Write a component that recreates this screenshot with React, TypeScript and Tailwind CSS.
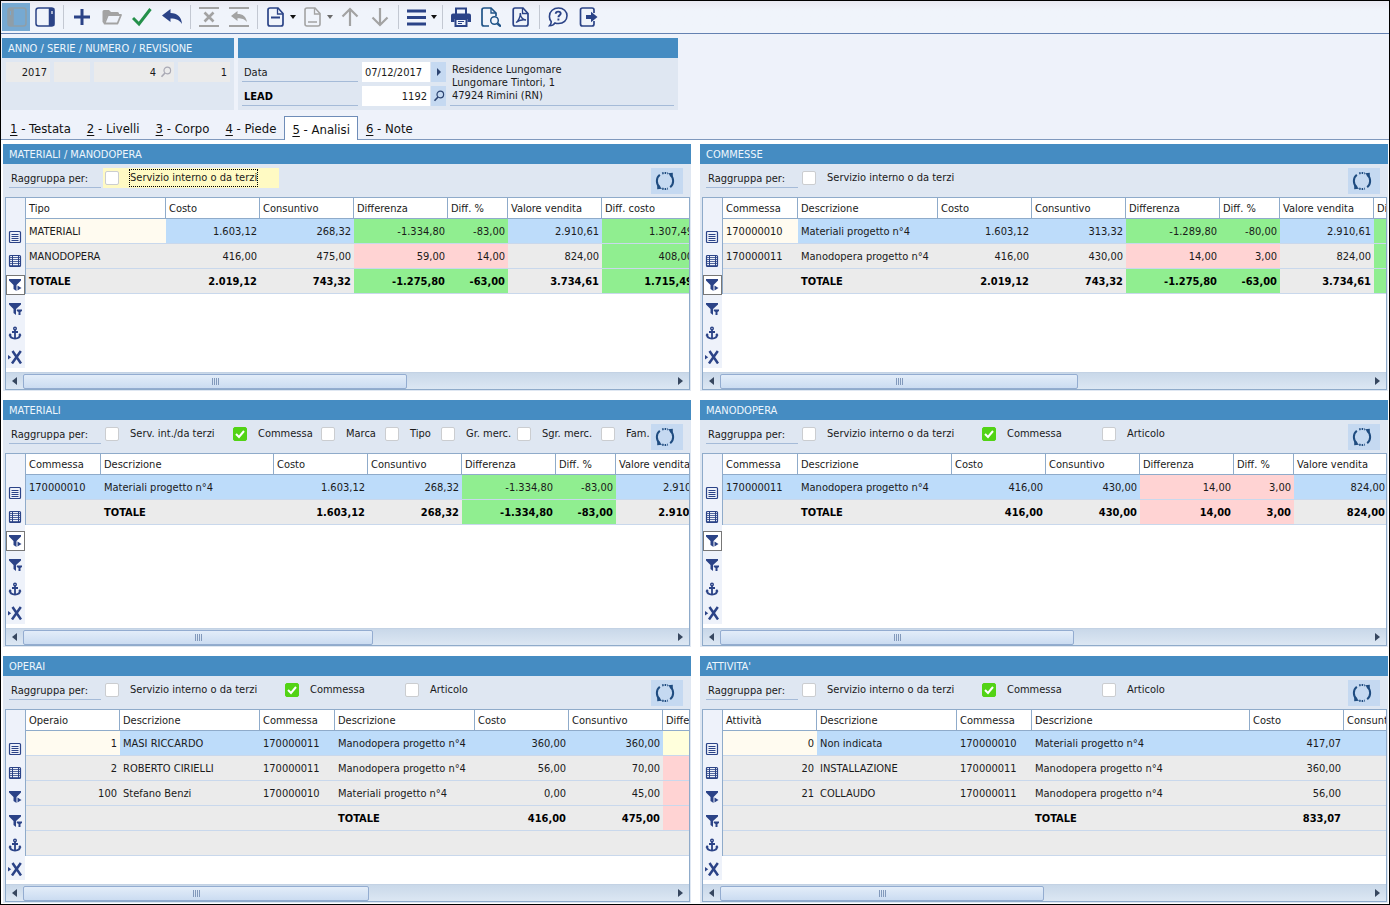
import type { ReactNode } from "react"
import { clsx } from "clsx"

const NAVY = "#2b4387"
const GREY = "#a3a3a3"

/* ---------- toolbar icons, all on a 20x20 grid ---------- */

function Glyph({ children, color = NAVY }: { children: ReactNode; color?: string }) {
  return (
    <svg
      width="20"
      height="20"
      viewBox="0 0 20 20"
      fill="none"
      stroke={color}
      strokeWidth="2"
      className="shrink-0"
      aria-hidden="true"
    >
      {children}
    </svg>
  )
}

const PanelLeftIcon = () => (
  <Glyph color="#8f9ea8">
    <rect x="1" y="1" width="18" height="18" rx="2.500" strokeWidth="1.500" />
    <path d="M4 1v18" strokeWidth="5.500" />
    <path d="M3.500 4v4" stroke="#76a9d2" strokeWidth="1" />
  </Glyph>
)

const PanelRightIcon = () => (
  <Glyph>
    <rect x="1" y="1" width="18" height="18" rx="2.500" strokeWidth="1.500" />
    <path d="M16.500 1v18" strokeWidth="5.500" />
    <path d="M17 4v3" stroke="#fff" strokeWidth="1.200" />
  </Glyph>
)

const PlusIcon = () => (
  <Glyph>
    <path d="M10 2v16M2 10h16" strokeWidth="3" />
  </Glyph>
)

const FolderIcon = () => (
  <Glyph color={GREY}>
    <path d="M.5 15V4.500Q.5 3 2 3h5l2 2h6.500q1.500 0 1.500 1.500V8H5.500L2 16.500z" fill={GREY} stroke="none" />
    <path d="M2.500 16.500 6 8h13l-3.500 8.500z" fill="#eef2fa" strokeWidth="1.800" strokeLinejoin="round" />
  </Glyph>
)

const CheckIcon = () => (
  <Glyph color="#24904a">
    <path d="M1 11 7 17 18.500 2" strokeWidth="3" />
  </Glyph>
)

const UndoIcon = () => (
  <Glyph>
    <path d="M0 8.500 8.500 2v4c7 0 11 4 11.500 11-2.500-4-6-5.500-11.500-5.500V15z" fill={NAVY} stroke="none" />
  </Glyph>
)

const DiscardIcon = () => (
  <Glyph color={GREY}>
    <path d="M0 1h20M0 19h20" strokeWidth="1.800" />
    <path d="m5.500 5.500 9 9M14.500 5.500l-9 9" strokeWidth="2.600" />
  </Glyph>
)

const RestoreIcon = () => (
  <Glyph color={GREY}>
    <path d="M0 1h20M0 19h20" strokeWidth="1.800" />
    <path d="M2 9 8.500 4v3c5.500 0 8.500 2.500 9.500 8-2.500-3-5-3.800-9.500-3.800V14z" fill={GREY} stroke="none" />
  </Glyph>
)

const PageIcon = () => (
  <Glyph>
    <path d="M4 1h8l5 5.500V17q0 2-2 2H4q-2 0-2-2V3q0-2 2-2z" strokeWidth="1.700" />
    <path d="M11.500 1v6H17" strokeWidth="1.300" />
    <path d="M5 10.500h9" />
  </Glyph>
)

const PageGreyIcon = () => (
  <Glyph color={GREY}>
    <path d="M4 1h8l5 5.500V17q0 2-2 2H4q-2 0-2-2V3q0-2 2-2z" strokeWidth="1.600" />
    <path d="M11.500 1v6H17" strokeWidth="1.300" />
    <path d="M5 15h9" strokeWidth="1.500" />
  </Glyph>
)

const UpIcon = () => (
  <Glyph color={GREY}>
    <path d="M10 19V2M2.500 9.500 10 2l7.500 7.500" strokeWidth="2.200" />
  </Glyph>
)

const DownIcon = () => (
  <Glyph color={GREY}>
    <path d="M10 1v17M2.500 10.500 10 18l7.500-7.500" strokeWidth="2.200" />
  </Glyph>
)

const MenuIcon = () => (
  <Glyph>
    <path d="M0 4h19M0 10.500h19M0 17h19" strokeWidth="2.800" />
  </Glyph>
)

const PrintIcon = () => (
  <Glyph>
    <path d="M5 7V1.500h10V7" />
    <path d="M2 6.500h16q2 0 2 2V15h-3.500v-3h-13v3H0V8.500q0-2 2-2z" fill={NAVY} stroke="none" />
    <path d="M4.500 12h11v7h-11z" />
    <path d="M7 14.500h6M7 16.500h4" strokeWidth="1" />
  </Glyph>
)

const PreviewIcon = () => (
  <Glyph color="#1f5387">
    <path d="M8 19H3q-2 0-2-2V3q0-2 2-2h7l5 5v3" strokeWidth="1.700" />
    <path d="M10 1v5h5" strokeWidth="1.300" />
    <circle cx="13.500" cy="13.500" r="3.800" strokeWidth="1.500" />
    <path d="m16.500 16.500 3.500 3" strokeWidth="2.400" />
  </Glyph>
)

const PdfIcon = () => (
  <Glyph>
    <path d="M4 1h8l5 5.500V17q0 2-2 2H4q-1.800 0-1.800-2V3Q2.200 1 4 1z" strokeWidth="1.700" />
    <path d="M11.500 1v5.500H17" strokeWidth="1.300" />
    <path d="M5 15.500C7.500 14 9.500 9.500 9.300 6c0 4 2.500 7 5.700 7-3-.6-7.500.4-10 2.500z" strokeWidth="1.400" />
  </Glyph>
)

const HelpIcon = () => (
  <Glyph>
    <path
      d="M10.500 1C15.500 1 19 4.300 19 8.800s-3.500 7.700-8.500 7.700c-1.300 0-2.500-.2-3.500-.6C6 17.500 4 18.800 1.500 18.800c1.200-1.200 1.800-2.500 1.700-4.200A7.500 7.500 0 0 1 1.500 9C1.500 4.300 5.500 1 10.500 1z"
      strokeWidth="1.600"
    />
    <path d="M7.700 6.700C7.800 5.300 8.800 4.600 10.200 4.600c1.500 0 2.500.8 2.500 2 0 1.700-2.300 1.800-2.300 3.700M10.400 11.500v2" strokeWidth="1.900" />
  </Glyph>
)

const ExitIcon = () => (
  <Glyph>
    <path d="M16 6V3q0-2-2-2H4.500q-2 0-2 2v14q0 2 2 2H14q2 0 2-2v-3" strokeWidth="1.700" />
    <path d="M8 8h5V4.800l6.500 5.200-6.500 5.200V12H8z" fill={NAVY} stroke="none" />
  </Glyph>
)

function Tool({
  label,
  icon,
  menu,
  muted,
  active,
}: {
  label: string
  icon: ReactNode
  menu?: boolean
  muted?: boolean
  active?: boolean
}) {
  return (
    <button
      type="button"
      aria-label={label}
      className={clsx(
        "flex h-7 items-center pl-[5px]",
        menu ? "w-[37px]" : active ? "w-7 bg-[#76a9d2] pl-[3px]" : "w-[30px]",
      )}
    >
      {icon}
      {menu && (
        <svg width="6" height="4" viewBox="0 0 6 4" className="ml-1 shrink-0" aria-hidden="true">
          <path d="M0 0h6L3 4z" fill={muted ? "#6b6b6b" : "#111"} />
        </svg>
      )}
    </button>
  )
}

const Divider = () => <span className="mx-[3px] h-6 w-px bg-[#c3c8d2]" />

/* ---------- side strip icons ---------- */

function Mini({ children }: { children: ReactNode }) {
  return (
    <svg width="14" height="14" viewBox="0 0 14 14" fill="none" stroke={NAVY} aria-hidden="true">
      {children}
    </svg>
  )
}

const stripIcons = [
  {
    label: "Scheda",
    icon: (
      <Mini>
        <rect x="1.500" y="1.500" width="11" height="11" rx="1" strokeWidth="1.200" />
        <path d="M3.500 4.500h7M3.500 6.500h7M3.500 8.500h7M3.500 10.500h7" strokeWidth="1" />
      </Mini>
    ),
  },
  {
    label: "Griglia",
    icon: (
      <Mini>
        <rect x="1.500" y="1.500" width="11" height="11" rx="1" strokeWidth="1.200" />
        <path d="M1.500 3.500h11M1.500 5.500h11M1.500 7.500h11M1.500 9.500h11M1.500 11.500h11" strokeWidth="1" strokeOpacity=".8" />
        <path d="M4.500 2v10M10.500 2v10" strokeWidth="1" />
      </Mini>
    ),
  },
  {
    label: "Filtro da selezione",
    icon: (
      <Mini>
        <path d="M1 1h12v1.500L8.500 7v6L5.500 11V7L1 2.500z" fill={NAVY} stroke="none" />
        <path d="m9.500 7.500 4 2.500-4 2.500z" fill={NAVY} stroke="none" />
      </Mini>
    ),
  },
  {
    label: "Filtro",
    icon: (
      <Mini>
        <path d="M1 1h12v1.500L8 7v6L5.500 11V7L1 2.500z" fill={NAVY} stroke="none" />
        <path d="M8.800 7.500H14V9l-1.500 1v3h-2v-3L8.800 9z" fill={NAVY} stroke="none" />
      </Mini>
    ),
  },
  {
    label: "Ancora",
    icon: (
      <Mini>
        <circle cx="7" cy="2.500" r="1.300" strokeWidth="1.400" />
        <path d="M7 4v8.500M4 6h6" strokeWidth="1.800" />
        <path d="M1.800 8.500c.2 2.500 2.200 4 5.200 4s5-1.500 5.200-4" strokeWidth="1.900" />
        <path d="M.5 9.500 2 7l2 2.300zM13.500 9.500 12 7l-2 2.300z" fill={NAVY} stroke="none" />
      </Mini>
    ),
  },
  {
    label: "Esporta",
    icon: (
      <Mini>
        <path d="m0 5 3.200 2.200L0 9.500z" fill={NAVY} stroke="none" />
        <path d="m4.500 1 8.500 12.500M12.800 1 4 13.500" strokeWidth="2.500" />
      </Mini>
    ),
  },
]

const RefreshIcon = () => (
  <svg width="20" height="20" viewBox="0 0 20 20" fill="none" stroke="#1f4c80" strokeWidth="2" aria-hidden="true">
    <path d="M4.800 3.800A8 8 0 0 0 4.800 16.200M15.200 3.800A8 8 0 0 1 15.200 16.200" />
    <path d="M7.200 2.500A8 8 0 0 1 12.800 2.500M7.200 17.500A8 8 0 0 0 12.800 17.500" strokeDasharray="1.500 1" />
    <path d="m13 2.200 4.800-.4v5.700zM7 17.800l-4.800.4v-5.700z" fill="#1f4c80" stroke="none" />
  </svg>
)

const Lens = ({ color }: { color: string }) => (
  <svg width="12" height="12" viewBox="0 0 12 12" fill="none" stroke={color} aria-hidden="true">
    <circle cx="7.300" cy="4.500" r="3.300" strokeWidth="1.200" />
    <path d="M5 7 1.500 10.800" strokeWidth="1.600" />
  </svg>
)

/* ---------- data grids ---------- */

type Tone = "green" | "pink" | "yellow" | "cream"
type Cell = string | { v: string; tone: Tone }
type Column = { name: string; width: string; right?: boolean }
type Row = { cells: Cell[]; selected?: boolean; total?: boolean }
type Option = { name: string; width: string; on?: boolean; focused?: boolean }

interface GridPanelProps {
  title: string
  options: Option[]
  columns: Column[]
  rows: Row[]
  thumb: string
  filtering?: boolean
}

const tones: Record<Tone, string> = {
  green: "bg-[#90ee90]",
  pink: "bg-[#ffd3d3]",
  yellow: "bg-[#ffffdc]",
  cream: "bg-[#fffbf0]",
}

const g = (v: string): Cell => ({ v, tone: "green" })
const p = (v: string): Cell => ({ v, tone: "pink" })
const c = (v: string): Cell => ({ v, tone: "cream" })

const text = (name: string, width: string): Column => ({ name, width })
const num = (name: string, width = "w-[94px]"): Column => ({ name, width, right: true })

function OptionBox({ option }: { option: Option }) {
  return (
    <label
      className={clsx(
        "flex h-5 shrink-0 items-center pl-0.5 whitespace-nowrap",
        option.width,
      )}
    >
      <span
        className={clsx(
          "flex h-5 items-center",
          option.focused && "-ml-0.5 w-[176px] bg-[#fffac3] pl-0.5",
        )}
      >
        <span className="mr-[11px] grid">
          <input
            type="checkbox"
            defaultChecked={option.on}
            className="peer col-start-1 row-start-1 size-[14px] appearance-none rounded-xs border border-[#cbcdd0] bg-white checked:border-[#52d315] checked:bg-[#52d315]"
          />
          <svg
            viewBox="0 0 14 14"
            className="pointer-events-none invisible col-start-1 row-start-1 size-[14px] peer-checked:visible"
            fill="none"
            stroke="#fff"
            strokeWidth="2"
            aria-hidden="true"
          >
            <path d="m3 7 3 3 5-6" />
          </svg>
        </span>
        <span className={clsx("leading-4", option.focused && "outline-1 outline-dotted outline-black")}>
          {option.name}
        </span>
      </span>
    </label>
  )
}

function GridPanel({ title, options, columns, rows, thumb, filtering }: GridPanelProps) {
  return (
    <section className="min-w-0 bg-[#dfe7f2] pb-px">
      <h2 className="h-5 bg-[#458cc2] pl-1.5 leading-[22px] text-[#eef6fd]">{title}</h2>

      <div className="flex h-[33px] pt-1 pl-1.5">
        <span className="h-5 w-[92px] shrink-0 border-b border-[#a5bbd8] pl-0.5 leading-[22px] whitespace-nowrap">
          Raggruppa per:
        </span>
        <div className="ml-0.5 flex min-w-0 flex-1 overflow-hidden">
          {options.map((option) => (
            <OptionBox key={option.name} option={option} />
          ))}
        </div>
        <button
          type="button"
          aria-label="Aggiorna"
          className="mr-2 flex h-[26px] w-8 shrink-0 items-center justify-center bg-[#c5d9f1] pr-1"
        >
          <RefreshIcon />
        </button>
      </div>

      <div className="mr-px ml-0.5 border border-[#8fabca] bg-white">
        <div className="flex h-[174px]">
          <div className="flex h-[170px] w-[19px] shrink-0 flex-col gap-1 bg-[#eef2fa] pt-[29px]">
            {stripIcons.map(({ label, icon }, i) => (
              <button
                key={label}
                type="button"
                aria-label={label}
                className={clsx(
                  "flex h-5 items-center border pl-px",
                  filtering && i === 2 ? "border-[#777] bg-white" : "border-transparent",
                )}
              >
                {icon}
              </button>
            ))}
          </div>

          <div className="min-w-0 flex-1 overflow-hidden">
            <table className="w-px table-fixed border-separate border-spacing-0 border-l border-[#8fabca]">
              <thead>
                <tr>
                  {columns.map((col, i) => (
                    <th
                      key={i}
                      className={clsx(
                        "h-[21px] border-r border-b border-[#8fabca] bg-white px-[3px] text-left font-normal whitespace-nowrap",
                        col.width,
                      )}
                    >
                      {col.name}
                    </th>
                  ))}
                </tr>
              </thead>
              <tbody>
                {rows.map((row, r) => (
                  <tr key={r} className={clsx(row.selected ? "bg-[#bddcfa]" : "bg-[#ebebeb]", row.total && "font-bold text-black")}>
                    {columns.map((col, i) => {
                      const cell = row.cells[i] ?? ""
                      const plain = typeof cell === "string"
                      return (
                        <td
                          key={i}
                          className={clsx(
                            "h-[25px] overflow-hidden border-b border-[#c9d8ec] px-[3px] whitespace-nowrap",
                            col.right && "text-right",
                            !plain && tones[cell.tone],
                          )}
                        >
                          {plain ? cell : cell.v}
                        </td>
                      )
                    })}
                  </tr>
                ))}
              </tbody>
            </table>
          </div>
        </div>

        <div className="flex h-[17px] items-center border-t border-[#c3d2e4] bg-linear-to-b from-[#c9d8e9] to-[#dce7f3]">
          <button type="button" aria-label="Scorri a sinistra" className="flex w-[17px] justify-center">
            <svg width="5" height="8" viewBox="0 0 5 8" aria-hidden="true">
              <path d="M5 0v8L0 4z" fill="#37475f" />
            </svg>
          </button>
          <div
            className={clsx(
              "flex h-[15px] items-center justify-center gap-px rounded-xs border border-[#93acd0] bg-linear-to-b from-[#e3edf9] to-[#cbdcf1]",
              thumb,
            )}
          >
            <span className="h-[7px] w-px bg-[#8299bb]" />
            <span className="h-[7px] w-px bg-[#8299bb]" />
            <span className="h-[7px] w-px bg-[#8299bb]" />
            <span className="h-[7px] w-px bg-[#8299bb]" />
          </div>
          <button type="button" aria-label="Scorri a destra" className="ml-auto flex w-[17px] justify-center">
            <svg width="5" height="8" viewBox="0 0 5 8" aria-hidden="true">
              <path d="M0 0v8l5-4z" fill="#37475f" />
            </svg>
          </button>
        </div>
      </div>
    </section>
  )
}

const byService: Option = { name: "Servizio interno o da terzi", width: "w-[180px]" }
const serviceJobItem: Option[] = [
  byService,
  { name: "Commessa", width: "w-[120px]", on: true },
  { name: "Articolo", width: "w-[100px]" },
]

const panels: GridPanelProps[] = [
  {
    title: "MATERIALI / MANODOPERA",
    options: [{ ...byService, focused: true }],
    columns: [
      text("Tipo", "w-[140px]"),
      num("Costo"),
      num("Consuntivo"),
      num("Differenza"),
      num("Diff. %", "w-[60px]"),
      num("Valore vendita"),
      num("Diff. costo"),
    ],
    rows: [
      { selected: true, cells: [c("MATERIALI"), "1.603,12", "268,32", g("-1.334,80"), g("-83,00"), "2.910,61", g("1.307,49")] },
      { cells: ["MANODOPERA", "416,00", "475,00", p("59,00"), p("14,00"), "824,00", g("408,00")] },
      { total: true, cells: ["TOTALE", "2.019,12", "743,32", g("-1.275,80"), g("-63,00"), "3.734,61", g("1.715,49")] },
    ],
    thumb: "w-[384px]",
    filtering: true,
  },
  {
    title: "COMMESSE",
    options: [byService],
    columns: [
      text("Commessa", "w-[75px]"),
      text("Descrizione", "w-[140px]"),
      num("Costo"),
      num("Consuntivo"),
      num("Differenza"),
      num("Diff. %", "w-[60px]"),
      num("Valore vendita"),
      num("Diff. costo"),
    ],
    rows: [
      {
        selected: true,
        cells: [c("170000010"), "Materiali progetto n°4", "1.603,12", "313,32", g("-1.289,80"), g("-80,00"), "2.910,61", g("")],
      },
      { cells: ["170000011", "Manodopera progetto n°4", "416,00", "430,00", p("14,00"), p("3,00"), "824,00", g("")] },
      { total: true, cells: ["", "TOTALE", "2.019,12", "743,32", g("-1.275,80"), g("-63,00"), "3.734,61", g("")] },
    ],
    thumb: "w-[358px]",
    filtering: true,
  },
  {
    title: "MATERIALI",
    options: [
      { name: "Serv. int./da terzi", width: "w-[128px]" },
      { name: "Commessa", width: "w-[88px]", on: true },
      { name: "Marca", width: "w-[64px]" },
      { name: "Tipo", width: "w-[56px]" },
      { name: "Gr. merc.", width: "w-[76px]" },
      { name: "Sgr. merc.", width: "w-[84px]" },
      { name: "Fam.", width: "w-[52px]" },
    ],
    columns: [
      text("Commessa", "w-[75px]"),
      text("Descrizione", "w-[173px]"),
      num("Costo"),
      num("Consuntivo"),
      num("Differenza"),
      num("Diff. %", "w-[60px]"),
      num("Valore vendita"),
    ],
    rows: [
      {
        selected: true,
        cells: ["170000010", "Materiali progetto n°4", "1.603,12", "268,32", g("-1.334,80"), g("-83,00"), "2.910,61"],
      },
      { total: true, cells: ["", "TOTALE", "1.603,12", "268,32", g("-1.334,80"), g("-83,00"), "2.910,61"] },
    ],
    thumb: "w-[350px]",
    filtering: true,
  },
  {
    title: "MANODOPERA",
    options: serviceJobItem,
    columns: [
      text("Commessa", "w-[75px]"),
      text("Descrizione", "w-[154px]"),
      num("Costo"),
      num("Consuntivo"),
      num("Differenza"),
      num("Diff. %", "w-[60px]"),
      num("Valore vendita"),
    ],
    rows: [
      {
        selected: true,
        cells: ["170000011", "Manodopera progetto n°4", "416,00", "430,00", p("14,00"), p("3,00"), "824,00"],
      },
      { total: true, cells: ["", "TOTALE", "416,00", "430,00", p("14,00"), p("3,00"), "824,00"] },
    ],
    thumb: "w-[354px]",
    filtering: true,
  },
  {
    title: "OPERAI",
    options: serviceJobItem,
    columns: [
      num("Operaio"),
      text("Descrizione", "w-[140px]"),
      text("Commessa", "w-[75px]"),
      text("Descrizione", "w-[140px]"),
      num("Costo"),
      num("Consuntivo"),
      num("Differenza"),
    ],
    rows: [
      {
        selected: true,
        cells: [c("1"), "MASI RICCARDO", "170000011", "Manodopera progetto n°4", "360,00", "360,00", { v: "", tone: "yellow" }],
      },
      { cells: ["2", "ROBERTO CIRIELLI", "170000011", "Manodopera progetto n°4", "56,00", "70,00", p("")] },
      { cells: ["100", "Stefano Benzi", "170000010", "Materiali progetto n°4", "0,00", "45,00", p("")] },
      { total: true, cells: ["", "", "", "TOTALE", "416,00", "475,00", p("")] },
      { cells: [] },
    ],
    thumb: "w-[346px]",
  },
  {
    title: "ATTIVITA'",
    options: serviceJobItem,
    columns: [
      num("Attività"),
      text("Descrizione", "w-[140px]"),
      text("Commessa", "w-[75px]"),
      text("Descrizione", "w-[218px]"),
      num("Costo"),
      num("Consuntivo"),
    ],
    rows: [
      { selected: true, cells: [c("0"), "Non indicata", "170000010", "Materiali progetto n°4", "417,07"] },
      { cells: ["20", "INSTALLAZIONE", "170000011", "Manodopera progetto n°4", "360,00"] },
      { cells: ["21", "COLLAUDO", "170000011", "Manodopera progetto n°4", "56,00"] },
      { total: true, cells: ["", "", "", "TOTALE", "833,07"] },
      { cells: [] },
    ],
    thumb: "w-[324px]",
  },
]

const tabs = ["Testata", "Livelli", "Corpo", "Piede", "Analisi", "Note"]

export default function App() {
  return (
    <div className="min-h-screen overflow-hidden border border-black bg-[#eef2fa] font-['Tahoma','DejaVu_Sans_Condensed','DejaVu_Sans',sans-serif] text-[11px] leading-[13px] text-[#1a1a1a]">
      <header className="flex h-[33px] items-center border-b border-[#6481b1] bg-linear-to-b from-[#e9e9f2] to-[#f0f4fb] to-30% pl-px">
        <Tool label="Pannello sinistro" icon={<PanelLeftIcon />} active />
        <Tool label="Pannello destro" icon={<PanelRightIcon />} />
        <Divider />
        <Tool label="Nuovo" icon={<PlusIcon />} />
        <Tool label="Apri" icon={<FolderIcon />} />
        <Tool label="Conferma" icon={<CheckIcon />} />
        <Tool label="Annulla" icon={<UndoIcon />} />
        <Divider />
        <Tool label="Elimina riga" icon={<DiscardIcon />} />
        <Tool label="Ripristina riga" icon={<RestoreIcon />} />
        <Divider />
        <Tool label="Documento" icon={<PageIcon />} menu />
        <Tool label="Documento collegato" icon={<PageGreyIcon />} menu muted />
        <Tool label="Precedente" icon={<UpIcon />} />
        <Tool label="Successivo" icon={<DownIcon />} />
        <Divider />
        <Tool label="Menu" icon={<MenuIcon />} menu />
        <Divider />
        <Tool label="Stampa" icon={<PrintIcon />} />
        <Tool label="Anteprima" icon={<PreviewIcon />} />
        <Tool label="Esporta PDF" icon={<PdfIcon />} />
        <Divider />
        <Tool label="Aiuto" icon={<HelpIcon />} />
        <Tool label="Esci" icon={<ExitIcon />} />
      </header>

      <div className="flex items-stretch gap-1 pt-1 pl-px">
        <section className="w-[232px] bg-[#dfe7f2]">
          <h2 className="h-5 bg-[#458cc2] pl-1.5 leading-[22px] whitespace-nowrap text-[#eef6fd]">
            ANNO / SERIE / NUMERO / REVISIONE
          </h2>
          <div className="flex gap-1 px-1 pt-1">
            <input aria-label="Anno" readOnly defaultValue="2017" className="h-5 w-11 bg-[#ebebeb] pr-[3px] text-right" />
            <input aria-label="Serie" readOnly className="h-5 w-9 bg-[#ebebeb]" />
            <div className="flex h-5 w-20 items-center bg-[#ebebeb]">
              <input aria-label="Numero" readOnly defaultValue="4" className="w-[62px] text-right" />
              <button type="button" aria-label="Cerca numero" className="ml-1">
                <Lens color="#a9a9b4" />
              </button>
            </div>
            <input aria-label="Revisione" readOnly defaultValue="1" className="h-5 w-[52px] bg-[#ebebeb] pr-[3px] text-right" />
          </div>
        </section>

        <section className="w-[440px] bg-[#dfe7f2]">
          <div className="h-5 bg-[#458cc2]" />
          <div className="flex gap-1 px-1 py-1">
            <div className="flex w-[116px] flex-col gap-1">
              <label htmlFor="data" className="h-5 border-b border-[#a5bbd8] pl-0.5 leading-[22px]">
                Data
              </label>
              <label htmlFor="lead" className="h-5 border-b border-[#a5bbd8] pl-0.5 leading-[22px] font-bold text-black">
                LEAD
              </label>
            </div>
            <div className="flex flex-col gap-1">
              <div className="flex h-5 gap-px">
                <input id="data" defaultValue="07/12/2017" className="w-[68px] bg-white pl-[3px]" />
                <button type="button" aria-label="Calendario" className="flex w-[15px] items-center justify-center bg-[#c5d9f1]">
                  <svg width="4" height="8" viewBox="0 0 4 8" aria-hidden="true">
                    <path d="M0 0v8l4-4z" fill="#2b4370" />
                  </svg>
                </button>
              </div>
              <div className="flex h-5 gap-px">
                <input id="lead" defaultValue="1192" className="w-[68px] bg-white pr-[3px] text-right" />
                <button type="button" aria-label="Cerca lead" className="flex w-[15px] items-center justify-center bg-[#c5d9f1]">
                  <Lens color="#2b4370" />
                </button>
              </div>
            </div>
            <address className="flex-1 border-b border-[#a5bbd8] pt-px pl-0.5 not-italic">
              Residence Lungomare
              <br />
              Lungomare Tintori, 1
              <br />
              47924 Rimini (RN)
            </address>
          </div>
        </section>
      </div>

      <nav role="tablist" className="mt-1.5 flex h-6 border-b border-[#7f99bd] pl-px text-[13px] text-[#111]">
        {tabs.map((tab, i) => (
          <button
            key={tab}
            type="button"
            role="tab"
            aria-selected={tab === "Analisi"}
            className={clsx(
              "h-6 pt-px",
              tab === "Analisi" ? "-mb-px border border-b-0 border-[#6f8db8] bg-white px-[7px]" : "px-2",
            )}
          >
            <span className="underline underline-offset-2">{i + 1}</span> - {tab}
          </button>
        ))}
      </nav>

      <main className="grid grid-cols-2 gap-[9px] bg-white pt-1 pr-px pb-px pl-0.5">
        {panels.map((panel) => (
          <GridPanel key={panel.title} {...panel} />
        ))}
      </main>
    </div>
  )
}
